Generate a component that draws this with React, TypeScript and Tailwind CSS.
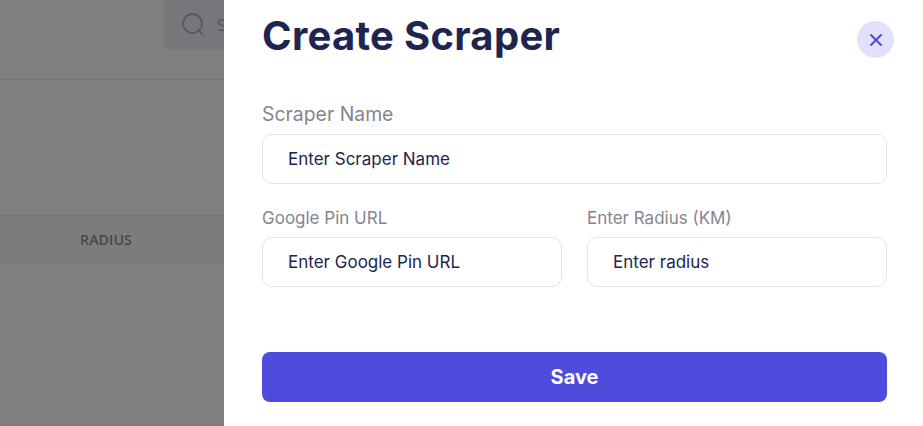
import React from "react";

const field = "flex h-[50px] items-center rounded-[10px] border border-[#e3e3ea] bg-white pl-[25px] pt-[2px] text-[17px] text-[#1e2550]";

export default function App() {
  return (
    <div className="flex h-[426px] w-[923px] overflow-hidden bg-white font-['Inter','Noto_Sans',sans-serif]">
      <div className="flex w-[224px] shrink-0 flex-col overflow-hidden bg-[#7f7f7f]">
        <div className="flex h-[80px] shrink-0 justify-end border-b border-[#777777]">
          <div className="flex h-[50px] w-[60px] items-center gap-[11px] rounded-bl-[10px] bg-[#76777b] pl-[18px]">
            <svg width="24" height="24" viewBox="0 0 24 24" fill="none" stroke="#55565b" strokeWidth="1.8" className="shrink-0">
              <circle cx="10.5" cy="10.5" r="9.5" />
              <path d="M17.5 18l3 3.5" strokeLinecap="round" />
            </svg>
            <span className="font-['Open_Sans',sans-serif] text-[17px] text-[#55565b]">S</span>
          </div>
        </div>
        <div className="h-[135px] shrink-0" />
        <div className="flex h-[48px] shrink-0 items-center border-t border-[#777777] bg-[#7c7c7c] pl-[80px]">
          <span className="font-['Open_Sans',sans-serif] text-[14.3px] font-semibold text-[#47474d]">RADIUS</span>
        </div>
      </div>

      <div className="flex flex-1 flex-col pl-[38px] pr-[36px]">
        <div className="flex h-[114px] shrink-0 justify-between">
          <h1 className="pt-[11px] text-[40px] leading-[50px] font-bold tracking-[0.3px] text-[#1e2550]">Create Scraper</h1>
          <button className="-mr-[7px] mt-[21px] flex h-[37px] w-[37px] items-center justify-center rounded-full bg-[#e2e1fb]">
            <svg width="14" height="14" viewBox="0 0 14 14" fill="none" stroke="#4f4bdc" strokeWidth="2">
              <path d="M1.5 1.5l11 11M12.5 1.5l-11 11" />
            </svg>
          </button>
        </div>

        <div className="-mt-[12px] mb-[8px] text-[19.4px] leading-[24px] text-[#85858f]">Scraper Name</div>
        <div className={field}>Enter Scraper Name</div>

        <div className="mt-[23px] flex gap-[25px]">
          <div className="flex-1">
            <div className="mb-[7px] text-[17px] leading-[23px] text-[#85858f]">Google Pin URL</div>
            <div className={field}>Enter Google Pin URL</div>
          </div>
          <div className="flex-1">
            <div className="mb-[7px] text-[17px] leading-[23px] text-[#85858f]">Enter Radius (KM)</div>
            <div className={field}>Enter radius</div>
          </div>
        </div>

        <button className="mt-[65px] h-[50px] w-full rounded-[8px] bg-[#4f4bdc] text-[20px] font-bold text-white">Save</button>
      </div>
    </div>
  );
}
